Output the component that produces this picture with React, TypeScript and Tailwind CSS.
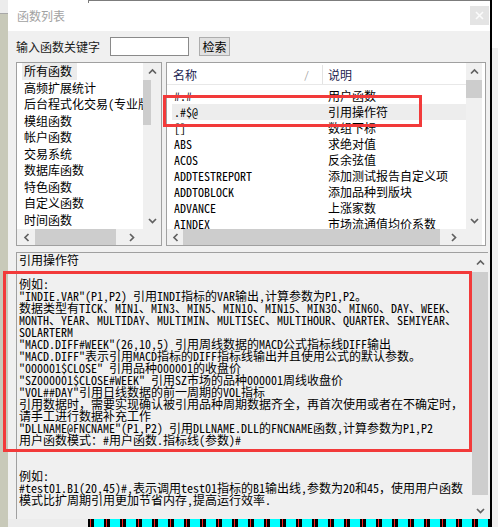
import React from "react";

const MONO = "font-['Noto_Sans_Mono_CJK_SC','Liberation_Mono','Noto_Sans_CJK_SC',monospace]";
const SANS = "font-['Noto_Sans_CJK_SC','Liberation_Sans',sans-serif]";

const GROUPS = [
  "所有函数",
  "高频扩展统计",
  "后台程式化交易(专业版",
  "模组函数",
  "帐户函数",
  "交易系统",
  "数据库函数",
  "特色函数",
  "自定义函数",
  "时间函数",
  "常数函数",
];

const FUNCS = [
  ["#.#", "用户函数"],
  [".#$@", "引用操作符"],
  ["[]", "数组下标"],
  ["ABS", "求绝对值"],
  ["ACOS", "反余弦值"],
  ["ADDTESTREPORT", "添加测试报告自定义项"],
  ["ADDTOBLOCK", "添加品种到版块"],
  ["ADVANCE", "上涨家数"],
  ["AINDEX", "市场流通值均价系数"],
];

const DESC = [
  "引用操作符",
  "",
  "例如:",
  "\"INDIE.VAR\"(P1,P2) 引用INDI指标的VAR输出,计算参数为P1,P2。",
  "数据类型有TICK、MIN1、MIN3、MIN5、MIN10、MIN15、MIN30、MIN60、DAY、WEEK、",
  "MONTH、YEAR、MULTIDAY、MULTIMIN、MULTISEC、MULTIHOUR、QUARTER、SEMIYEAR、",
  "SOLARTERM",
  "\"MACD.DIFF#WEEK\"(26,10,5) 引用周线数据的MACD公式指标线DIFF输出",
  "\"MACD.DIFF\"表示引用MACD指标的DIFF指标线输出并且使用公式的默认参数。",
  "\"000001$CLOSE\" 引用品种000001的收盘价",
  "\"SZ000001$CLOSE#WEEK\" 引用SZ市场的品种000001周线收盘价",
  "\"VOL##DAY\"引用日线数据的前一周期的VOL指标",
  "引用数据时，需要实现确认被引用品种周期数据齐全，再首次使用或者在不确定时，",
  "请手工进行数据补充工作",
  "\"DLLNAME@FNCNAME\"(P1,P2) 引用DLLNAME.DLL的FNCNAME函数,计算参数为P1,P2",
  "用户函数模式：#用户函数.指标线(参数)#",
  "",
  "",
  "例如:",
  "#test01.B1(20,45)#,表示调用test01指标的B1输出线,参数为20和45，使用用户函数",
  "模式比扩周期引用更加节省内存,提高运行效率.",
];

function Chevron({ dir }: { dir: "up" | "down" | "left" | "right" }) {
  const vertical = dir === "up" || dir === "down";
  const d = {
    up: "M1 5.5 L4.5 2 L8 5.5",
    down: "M1 2 L4.5 5.5 L8 2",
    left: "M5.5 1 L2 4.5 L5.5 8",
    right: "M2 1 L5.5 4.5 L2 8",
  }[dir];
  return (
    <svg width={vertical ? 9 : 7} height={vertical ? 7 : 9} viewBox={vertical ? "0 0 9 7" : "0 0 7 9"}>
      <path d={d} stroke="#606060" strokeWidth="1.7" fill="none" />
    </svg>
  );
}

export default function App() {
  return (
    <div className="relative flex h-[527px] w-[498px] overflow-hidden bg-[#f0f0f0]">
      {/* desktop strip on the left */}
      <div className="flex w-[8px] flex-col">
        <div className="h-[14px] border-b border-[#a8a8a8] bg-[#ececec]" />
        <div className="flex-1 bg-[#c8c9b9]" />
      </div>

      <div className="flex w-[482px] flex-col">
        <div className="flex h-[519px] flex-col">
          {/* title bar */}
          <div className="relative flex h-[31px] shrink-0 items-center justify-between bg-white pl-[9px] pr-[1px]">
            <div className="absolute left-[80px] right-0 top-0 h-px bg-[#7c7c7c]" />
            <div className="absolute left-[80px] top-0 h-[3px] w-px bg-[#7c7c7c]" />
            <span className={`${SANS} text-[12px] text-[#a2a2a2]`}>函数列表</span>
            <div className="flex h-[19px] w-[19px] items-center justify-center bg-[#e4e4e4]">
              <svg width="9" height="9" viewBox="0 0 9 9">
                <path d="M1 1 L8 8 M8 1 L1 8" stroke="#fbfbfb" strokeWidth="1.6" />
              </svg>
            </div>
          </div>

          {/* body */}
          <div className="flex flex-1 flex-col bg-[#f0f0f0] pl-[8px] pr-[4px]">
            <div className="mt-[6px] flex h-[19px] items-center">
              <span className={`${SANS} w-[94px] text-[12px] text-[#1a1a1a]`}>输入函数关键字</span>
              <div className="h-[19px] w-[79px] border border-[#8a8a8a] bg-white" />
              <div className={`${SANS} ml-[10px] flex h-[19px] w-[31px] items-center justify-center border border-[#adadad] bg-[#e1e1e1] text-[12px] text-black`}>
                检索
              </div>
            </div>

            <div className="mt-[6px] flex h-[184px] gap-[4px]">
              {/* group list */}
              <div className="flex w-[146px] flex-col border border-[#a0a0a0] bg-white">
                <div className="flex h-[166px]">
                  <div className={`${MONO} w-[126px] overflow-hidden whitespace-pre pl-[5px] text-[12px] text-black`}>
                    {GROUPS.map((g, i) => (
                      <div key={g} className="flex h-[16.5px] items-center">
                        <span className={`pl-[2px] pr-[5px] leading-[16.5px] ${i === 0 ? "bg-[#ececec]" : ""}`}>{g}</span>
                      </div>
                    ))}
                  </div>
                  <div className="flex w-[18px] flex-col bg-[#f0f0f0]">
                    <div className="flex h-[17px] items-center justify-center pl-[1px]">
                      <Chevron dir="up" />
                    </div>
                    <div className="h-[45px] w-[8px] bg-[#cdcdcd]" />
                    <div className="flex-1" />
                    <div className="flex h-[17px] items-center justify-center pl-[1px]">
                      <Chevron dir="down" />
                    </div>
                  </div>
                </div>
                <div className="flex h-[16px] bg-[#f0f0f0]">
                  <div className="flex w-[18px] items-center justify-center">
                    <Chevron dir="left" />
                  </div>
                  <div className="h-[16px] w-[81px] bg-[#cdcdcd]" />
                  <div className="flex w-[27px] items-center justify-center pl-[4px]">
                    <Chevron dir="right" />
                  </div>
                  <div className="flex-1" />
                </div>
              </div>

              {/* function table */}
              <div className="flex w-[320px] flex-col border border-[#a0a0a0] bg-white">
                <div className="flex h-[166px]">
                  <div className={`${MONO} w-[299px] overflow-hidden whitespace-pre text-[12px] text-black`}>
                    <div className="flex h-[22px] border-b border-t-[2px] border-[#e8e8e8] border-t-white">
                      <div className="flex w-[156px] items-center justify-between border-r border-[#e3e3e3] pl-[6px] pr-[13px] text-[#1c2450]">
                        <span>名称</span>
                        <span className="text-[10px] text-[#9a9a9a]">/</span>
                      </div>
                      <div className="flex items-center pl-[5px] text-[#1c2450]">说明</div>
                    </div>
                    <div className="mt-[3px]">
                      {FUNCS.map(([name, desc], i) => (
                        <div key={name} className={`ml-[5px] flex h-[16px] items-center ${i === 1 ? "bg-[#ededed]" : ""}`}>
                          <span className="w-[156px] pl-[2px]">{name}</span>
                          <span>{desc}</span>
                        </div>
                      ))}
                    </div>
                  </div>
                  <div className="flex w-[16px] flex-col bg-[#f0f0f0]">
                    <div className="flex h-[17px] items-center justify-center">
                      <Chevron dir="up" />
                    </div>
                    <div className="h-[18px] bg-[#cdcdcd]" />
                    <div className="flex-1" />
                    <div className="flex h-[17px] items-center justify-center">
                      <Chevron dir="down" />
                    </div>
                  </div>
                  <div className="w-[3px]" />
                </div>
                <div className="flex h-[16px]">
                  <div className="flex w-[299px] bg-[#f0f0f0]">
                    <div className="flex w-[16px] items-center justify-center">
                      <Chevron dir="left" />
                    </div>
                    <div className="h-[16px] w-[257px] bg-[#cdcdcd]" />
                    <div className="flex flex-1 items-center justify-center">
                      <Chevron dir="right" />
                    </div>
                  </div>
                  <div className="w-[16px] bg-[#f0f0f0]" />
                </div>
              </div>
            </div>

            {/* description */}
            <div className="mt-[6px] flex h-[267px] w-[472px] border-l border-t border-[#a0a0a0]">
              <div className={`${MONO} flex-1 overflow-hidden whitespace-pre pl-[2px] pt-[1px] text-[12px] leading-[12px] text-black`}>
                {DESC.map((line, i) => (
                  <div key={i} className="h-[12px]">
                    {line}
                  </div>
                ))}
              </div>
              <div className="flex w-[16px] flex-col bg-[#f0f0f0]">
                <div className="flex h-[19px] items-center justify-center">
                  <Chevron dir="up" />
                </div>
                <div className="h-[223px] bg-[#cdcdcd]" />
                <div className="flex flex-1 items-center justify-center pt-[6px]">
                  <Chevron dir="down" />
                </div>
              </div>
            </div>
          </div>
        </div>

        {/* chart strip behind the dialog */}
        <div className="flex h-[8px]">
          <div className="w-[80px] bg-[#ececec]" />
          <div className="flex flex-1 overflow-hidden bg-black">
            {Array.from({ length: 26 }).map((_, i) => (
              <div key={i} className="flex w-[16px] shrink-0">
                <div className="w-[2px]" />
                <div className="w-px bg-[#ff2020]" />
                <div className="w-[3px]" />
                <div className="w-[10px] bg-[#00ffff]" />
              </div>
            ))}
          </div>
        </div>
      </div>

      <div className="w-[2px] bg-black" />
      <div className="flex w-[6px] flex-col">
        <div className="h-[48px] bg-white" />
        <div className="flex-1 bg-[#f0f0f0]" />
      </div>

      {/* red highlight boxes */}
      <div className="absolute left-[163px] top-[95px] h-[32px] w-[259px] border-[3px] border-[#f23a3a]" />
      <div className="absolute left-[3px] top-[271px] h-[181px] w-[469px] border-[3px] border-[#f23a3a]" />
    </div>
  );
}
